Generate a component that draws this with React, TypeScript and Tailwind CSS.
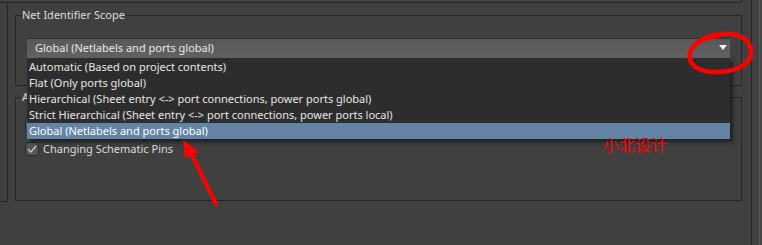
import { useState } from "react";

const OPTIONS = [
  "Automatic (Based on project contents)",
  "Flat (Only ports global)",
  "Hierarchical (Sheet entry <-> port connections, power ports global)",
  "Strict Hierarchical (Sheet entry <-> port connections, power ports local)",
  "Global (Netlabels and ports global)",
];

export default function App() {
  const [selected] = useState(4);

  return (
    <div className="relative flex h-[245px] w-[762px] overflow-hidden bg-[#404040] font-['Noto_Sans',sans-serif] text-[11px] text-[#dcdcdc]">
      <div className="flex w-[752px] flex-col border-r border-[#262626]">
        <div className="h-[3px] w-[742px] border-b border-r border-[#262626]" />
        <div className="flex">
          <div className="h-[199px] w-[8px] border-b border-r border-[#262626]" />
          <div className="ml-[7px] flex w-[727px] flex-col pt-[12px]">
            <Group title="Net Identifier Scope" height="h-[71px]">
              <div className="relative mx-[11px] mt-[15px]">
                <div className="flex h-[20px] items-center justify-between border-t border-[#2e2e2e] bg-gradient-to-b from-[#585858] to-[#626262] pl-[8px] pr-[3px] text-[#e8e8e8]">
                  <span>{OPTIONS[selected]}</span>
                  <svg width="8" height="5" viewBox="0 0 8 5" className="mb-[2px]">
                    <path d="M0 0 H8 L4 5 Z" fill="#f2f2f2" />
                  </svg>
                </div>
                <ul className="absolute left-0 right-0 top-full z-10 bg-[#2d2d2d] pt-[1px] shadow-[3px_3px_4px_rgba(0,0,0,0.55)]">
                  {OPTIONS.map((opt, i) => (
                    <li
                      key={opt}
                      className={
                        i === selected
                          ? "flex h-[16px] items-center bg-[#6384a4] pl-[2px] text-white"
                          : "flex h-[16px] items-center pl-[2px] text-[#e6e6e6]"
                      }
                    >
                      {opt}
                    </li>
                  ))}
                </ul>
              </div>
            </Group>
            <div className="mt-[11px]">
              <Group title="Allow Pin-Swapping Using These Methods" height="h-[104px]">
                <div className="flex flex-col gap-[11px] pl-[9px] pt-[12px]">
                  <CheckRow label="Adding / Removing Net-Labels" />
                  <CheckRow label="Changing Schematic Pins" />
                </div>
              </Group>
            </div>
          </div>
        </div>
      </div>
      <div className="w-[7px]" />
      <div className="w-[1px] bg-[#555555]" />
      <div className="w-[2px] bg-[#474747]" />

      {/* red annotations */}
      <svg
        className="pointer-events-none absolute left-0 top-0 z-20"
        width="762"
        height="245"
        viewBox="0 0 762 245"
      >
        <path
          d="M701 41 C712 31 744 30 750 46 C756 62 738 73 712 72 C691 71 685 58 693 47 C698 40 708 37 718 36"
          fill="none"
          stroke="#ff0000"
          strokeWidth="4.5"
          strokeLinecap="round"
        />
        <path
          d="M216 204 L190 151"
          stroke="#ff0000"
          strokeWidth="4"
          strokeLinecap="round"
        />
        <path d="M183 140 L199 152 L185 158 Z" fill="#ff0000" />
      </svg>
      <span className="absolute left-[603px] top-[134px] z-20 font-['Noto_Sans_CJK_SC',sans-serif] text-[16px] leading-[20px] text-[#ff0000]">
        小北设计
      </span>
    </div>
  );
}

type GroupProps = { title: string; height: string; children: React.ReactNode };

function Group({ title, height, children }: GroupProps) {
  return (
    <div className={`flex flex-col border border-[#262626] ${height}`}>
      <span className="-mt-[9px] ml-[5px] h-[16px] w-fit bg-[#404040] px-[1px] leading-[16px] text-[#dcdcdc]">
        {title}
      </span>
      {children}
    </div>
  );
}

function CheckRow({ label }: { label: string }) {
  return (
    <div className="flex h-[14px] items-center gap-[4px]">
      <div className="flex h-[14px] w-[14px] items-center justify-center rounded-[3px] border border-[#2a2a2a] bg-[#555555]">
        <svg width="10" height="8" viewBox="0 0 10 8">
          <path d="M1 4 L4 7 L9 1" fill="none" stroke="#cfcfcf" strokeWidth="1.2" />
        </svg>
      </div>
      <span className="text-[#dcdcdc]">{label}</span>
    </div>
  );
}
